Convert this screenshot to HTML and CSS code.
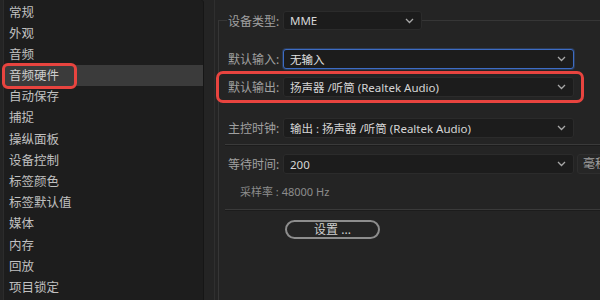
FILE: index.html
```html
<!DOCTYPE html>
<html lang="zh-CN">
<head>
<meta charset="utf-8">
<title>音频硬件</title>
<link rel="stylesheet" href="styles.css">
</head>
<body>
<div class="app">
  <ul class="sidebar">
    <li class="item">常规</li>
    <li class="item">外观</li>
    <li class="item">音频</li>
    <li class="item selected">音频硬件</li>
    <li class="item">自动保存</li>
    <li class="item">捕捉</li>
    <li class="item">操纵面板</li>
    <li class="item">设备控制</li>
    <li class="item">标签颜色</li>
    <li class="item">标签默认值</li>
    <li class="item">媒体</li>
    <li class="item">内存</li>
    <li class="item">回放</li>
    <li class="item">项目锁定</li>
  </ul>
  <div class="main">
    <div class="inner">
      <fieldset class="group">
        <legend class="legend">
          <span class="label">设备类型:</span>
          <span class="select select-type"><span class="val">MME</span><svg class="chev" width="9" height="6" viewBox="0 0 9 6"><polyline points="1,1 4.5,4.5 8,1" fill="none" stroke="#a8a8a8" stroke-width="1.3"/></svg></span>
        </legend>
        <div class="row row-input">
          <span class="label">默认输入:</span>
          <span class="select focused"><span class="val">无输入</span><svg class="chev" width="9" height="6" viewBox="0 0 9 6"><polyline points="1,1 4.5,4.5 8,1" fill="none" stroke="#a8a8a8" stroke-width="1.3"/></svg></span>
        </div>
        <div class="row row-output">
          <span class="label">默认输出:</span>
          <span class="select"><span class="val">扬声器 /听筒 (Realtek Audio)</span><svg class="chev" width="9" height="6" viewBox="0 0 9 6"><polyline points="1,1 4.5,4.5 8,1" fill="none" stroke="#a8a8a8" stroke-width="1.3"/></svg></span>
        </div>
        <div class="row row-clock">
          <span class="label">主控时钟:</span>
          <span class="select"><span class="val">输出 : 扬声器 /听筒 (Realtek Audio)</span><svg class="chev" width="9" height="6" viewBox="0 0 9 6"><polyline points="1,1 4.5,4.5 8,1" fill="none" stroke="#a8a8a8" stroke-width="1.3"/></svg></span>
        </div>
        <div class="sep sep-1"></div>
        <div class="row row-wait">
          <span class="label">等待时间:</span>
          <span class="select"><span class="val">200</span><svg class="chev" width="9" height="6" viewBox="0 0 9 6"><polyline points="1,1 4.5,4.5 8,1" fill="none" stroke="#a8a8a8" stroke-width="1.3"/></svg></span>
          <span class="unit">毫秒</span>
        </div>
        <div class="rate">采样率 : 48000 Hz</div>
        <div class="sep sep-2"></div>
        <button class="btn">设置 ...</button>
      </fieldset>
    </div>
  </div>
</div>
</body>
</html>
```
FILE: styles.css
```css
html, body {
  margin: 0;
  padding: 0;
  width: 600px;
  height: 300px;
  overflow: hidden;
  background: #242424;
}
body {
  font-family: "Noto Sans", "Noto Sans CJK SC", sans-serif;
  font-size: 12px;
  color: #c8c8c8;
}
.app {
  display: flex;
  height: 300px;
}
.sidebar {
  list-style: none;
  margin: 0 0 0 3px;
  padding: 1.5px 0 0 0;
  width: 199px;
  background: #1d1d1d;
  border-left: 1px solid #2c2c2c;
  border-right: 1px solid #161616;
  border-top-right-radius: 3px;
  flex: none;
}
.item {
  position: relative;
  height: 21.2px;
  line-height: 21.2px;
  padding-left: 5px;
  font-size: 12.5px;
  color: #c0c0c0;
  white-space: nowrap;
}
.item.selected {
  background: #3b3b3b;
  margin-left: 1px;
  padding-left: 4px;
  color: #cdcdcd;
}
.item.selected::after {
  content: "";
  position: absolute;
  left: -3px;
  top: -2px;
  width: 69px;
  height: 20px;
  border: 3px solid #e8443f;
  border-radius: 6px;
}
.main {
  flex: 1;
  padding: 11px 0 0 10px;
  overflow: hidden;
  display: flex;
}
.inner {
  flex: 1;
  border-left: 1px solid #2f2f2f;
  margin-top: -11px;
  padding: 11px 0 0 3px;
  display: flex;
  flex-direction: column;
}
.group {
  margin: 0;
  padding: 0 0 0 8px;
  border: 1px solid #363636;
  border-right: none;
  border-bottom: none;
  flex: 1;
  min-width: 0;
}
.legend {
  padding: 0 0 0 1px;
  margin: 0;
  display: flex;
  align-items: center;
  height: 19px;
}
.label {
  width: 55px;
  flex: none;
  color: #a0a0a0;
  font-size: 12px;
  white-space: nowrap;
}
.select {
  display: flex;
  align-items: center;
  justify-content: space-between;
  box-sizing: border-box;
  width: 291px;
  height: 20px;
  padding: 0 7px 0 6px;
  background: #1c1c1c;
  border: 1px solid #2b2b2b;
  border-radius: 3px;
  color: #d6d6d6;
  font-size: 11.5px;
  white-space: nowrap;
  flex: none;
}
.select-type {
  width: 139px;
  height: 19px;
}
.select.focused {
  border-color: #3d6cc4;
  box-shadow: 0 0 0 1px rgba(61, 108, 196, 0.3);
  color: #e2e2e2;
}
.val {
  overflow: hidden;
}
.chev {
  flex: none;
}
.row {
  display: flex;
  align-items: center;
}
.row-input {
  margin-top: 19px;
  padding-left: 1px;
}
.row-output {
  margin: 2px 0 0 -11px;
  width: 368px;
  box-sizing: border-box;
  padding: 3px 0 3px 9px;
  border: 3px solid #e8443f;
  border-radius: 7px;
}
.row-clock {
  margin-top: 15px;
  padding-left: 1px;
}
.sep {
  height: 1px;
  background: #3a3a3a;
  border-bottom: 1px solid #1c1c1c;
  margin-left: -2px;
}
.sep-1 {
  margin-top: 6px;
}
.row-wait {
  margin-top: 8px;
  padding-left: 1px;
}
.unit {
  flex: none;
  box-sizing: border-box;
  height: 20px;
  line-height: 18px;
  margin-left: 3px;
  padding-left: 5px;
  width: 60px;
  border: 1px solid #2e2e2e;
  border-radius: 3px;
  background: #262626;
  color: #a0a0a0;
}
.rate {
  margin: 10px 0 0 13px;
  height: 16px;
  line-height: 16px;
  font-size: 11px;
  color: #8c8c8c;
}
.sep-2 {
  margin-top: 9px;
}
.btn {
  margin: 9px 0 0 58px;
  width: 95px;
  height: 19px;
  box-sizing: border-box;
  background: #242424;
  border: 2px solid #8d8d8d;
  border-radius: 10px;
  color: #cfcfcf;
  font-family: "Noto Sans", "Noto Sans CJK SC", sans-serif;
  font-size: 12px;
  line-height: 13px;
  padding: 0;
  align-self: flex-start;
}
```
